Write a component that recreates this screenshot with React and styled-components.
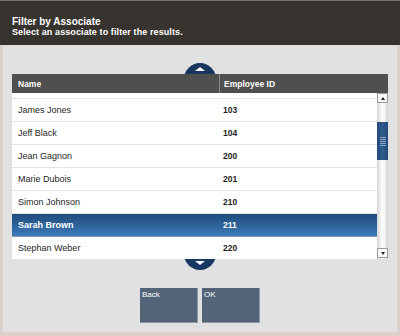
import React from 'react';
import styled, { createGlobalStyle } from 'styled-components';

const GlobalStyle = createGlobalStyle`
  html, body {
    margin: 0;
    padding: 0;
    background: #e1e1e1;
  }
  body {
    font-family: "Liberation Sans", Arial, sans-serif;
  }
`;

const Screen = styled.div`
  width: 400px;
  height: 336px;
  display: flex;
  flex-direction: column;
  overflow: hidden;
`;

const Header = styled.header`
  height: 45px;
  box-sizing: border-box;
  background: #37332f;
  border-top: 1px solid #77736f;
  padding: 15px 0 0 12px;
  color: #fff;
`;

const Title = styled.div`
  font-size: 10px;
  font-weight: bold;
  line-height: 11px;
`;

const Subtitle = styled.div`
  font-size: 9px;
  font-weight: bold;
  line-height: 10px;
  letter-spacing: 0.1px;
`;

const Body = styled.main`
  flex: 1;
  display: flex;
  flex-direction: column;
  background: #e1e1e1;
  border-left: 3px solid #dcd2cb;
  border-right: 3px solid #dcd2cb;
  border-bottom: 4px solid #ddd1c9;
  padding: 18px 9px 0;
`;

const Cap = styled.div`
  align-self: center;
  width: 32px;
  height: 11px;
  overflow: hidden;
  display: flex;
  align-items: ${p => (p.$down ? 'flex-end' : 'flex-start')};
  justify-content: center;
`;

const CapCircle = styled.div`
  flex: none;
  width: 32px;
  height: 32px;
  border-radius: 50%;
  background: #17375e;
  display: flex;
  align-items: ${p => (p.$down ? 'flex-end' : 'flex-start')};
  justify-content: center;
  padding: ${p => (p.$down ? '0 0 5px' : '4px 0 0')};
  box-sizing: border-box;
`;

const Triangle = styled.div`
  width: 0;
  height: 0;
  border-left: 5px solid transparent;
  border-right: 5px solid transparent;
  ${p => (p.$down ? 'border-top: 4px solid #fff;' : 'border-bottom: 4px solid #fff;')}
`;

const Table = styled.div`
  display: flex;
  flex-direction: column;
  width: 376px;
`;

const HeadRow = styled.div`
  display: grid;
  grid-template-columns: 207px 1fr;
  height: 19px;
  background: #4f4f4f;
  color: #fff;
  font-size: 8.5px;
  line-height: 10px;
  font-weight: bold;
`;

const HeadCell = styled.div`
  display: flex;
  align-items: center;
  padding-left: ${p => (p.$second ? '4px' : '6px')};
  border-left: ${p => (p.$second ? '1px solid #8a8a8a' : 'none')};
`;

const TableBody = styled.div`
  display: flex;
  height: 166px;
`;

const Viewport = styled.div`
  flex: 1;
  overflow: hidden;
  background: #fff;
`;

/* bottom sliver of the row scrolled out above */
const PartialRow = styled.div`
  height: 5px;
  border-bottom: 1px solid #e4e4e4;
`;

const Row = styled.div`
  display: grid;
  grid-template-columns: 206px 1fr;
  height: 23px;
  box-sizing: border-box;
  align-items: center;
  border-bottom: 1px solid ${p => (p.$selected ? '#8a9ab0' : '#e4e4e4')};
  background: ${p => (p.$selected ? 'linear-gradient(#1f4b7b, #3c7aba)' : '#fff')};
  color: ${p => (p.$selected ? '#fff' : '#1e1e1e')};
  font-size: 9px;
  font-weight: ${p => (p.$selected ? 'bold' : 'normal')};
`;

const NameCell = styled.div`
  padding-left: 6px;
`;

const IdCell = styled.div`
  padding-left: 5px;
  font-weight: bold;
  font-size: 8.5px;
`;

const Scrollbar = styled.div`
  width: 11px;
  display: flex;
  flex-direction: column;
  background: linear-gradient(90deg, #d4d4d4, #fdfdfd 45%, #f4f4f4 70%, #cfcfcf);
`;

const ScrollBtn = styled.div`
  height: 10px;
  box-sizing: border-box;
  background: #fbfbfb;
  border: 1px solid #9a9a9a;
  display: flex;
  align-items: center;
  justify-content: center;
  margin-top: ${p => (p.$down ? 'auto' : '0')};
  margin-bottom: ${p => (p.$down ? '1px' : '0')};
`;

const TinyArrow = styled.div`
  width: 0;
  height: 0;
  border-left: 2.5px solid transparent;
  border-right: 2.5px solid transparent;
  ${p => (p.$down ? 'border-top: 3px solid #222;' : 'border-bottom: 3px solid #222;')}
`;

const Thumb = styled.div`
  margin-top: 19px;
  height: 38px;
  background: linear-gradient(90deg, #24497a, #2e5a8e 50%, #24497a);
  display: flex;
  flex-direction: column;
  align-items: center;
  justify-content: center;
  gap: 1px;
`;

const Grip = styled.div`
  width: 6px;
  height: 1px;
  background: #8ea6c4;
`;

const Actions = styled.div`
  display: flex;
  justify-content: center;
  gap: 4px;
  margin-top: 18px;
`;

const ActionButton = styled.button`
  width: 58px;
  height: 35px;
  box-sizing: border-box;
  background: #536479;
  border: none;
  border-right: 1px solid #8d98a6;
  border-bottom: 1px solid #8d98a6;
  color: #fff;
  font-family: "Liberation Sans", Arial, sans-serif;
  font-size: 8px;
  line-height: 9px;
  padding: 2px 2px;
  display: flex;
  align-items: flex-start;
`;

const associates = [
  { name: 'James Jones', id: '103' },
  { name: 'Jeff Black', id: '104' },
  { name: 'Jean Gagnon', id: '200' },
  { name: 'Marie Dubois', id: '201' },
  { name: 'Simon Johnson', id: '210' },
  { name: 'Sarah Brown', id: '211', selected: true },
  { name: 'Stephan Weber', id: '220' },
];

export default function App() {
  return (
    <Screen>
      <GlobalStyle />
      <Header>
        <Title>Filter by Associate</Title>
        <Subtitle>Select an associate to filter the results.</Subtitle>
      </Header>
      <Body>
        <Cap>
          <CapCircle>
            <Triangle />
          </CapCircle>
        </Cap>
        <Table>
          <HeadRow>
            <HeadCell>Name</HeadCell>
            <HeadCell $second>Employee ID</HeadCell>
          </HeadRow>
          <TableBody>
            <Viewport>
              <PartialRow />
              {associates.map(a => (
                <Row key={a.id} $selected={a.selected}>
                  <NameCell>{a.name}</NameCell>
                  <IdCell>{a.id}</IdCell>
                </Row>
              ))}
            </Viewport>
            <Scrollbar>
              <ScrollBtn>
                <TinyArrow />
              </ScrollBtn>
              <Thumb>
                <Grip />
                <Grip />
                <Grip />
                <Grip />
                <Grip />
              </Thumb>
              <ScrollBtn $down>
                <TinyArrow $down />
              </ScrollBtn>
            </Scrollbar>
          </TableBody>
        </Table>
        <Cap $down>
          <CapCircle $down>
            <Triangle $down />
          </CapCircle>
        </Cap>
        <Actions>
          <ActionButton>Back</ActionButton>
          <ActionButton>OK</ActionButton>
        </Actions>
      </Body>
    </Screen>
  );
}
